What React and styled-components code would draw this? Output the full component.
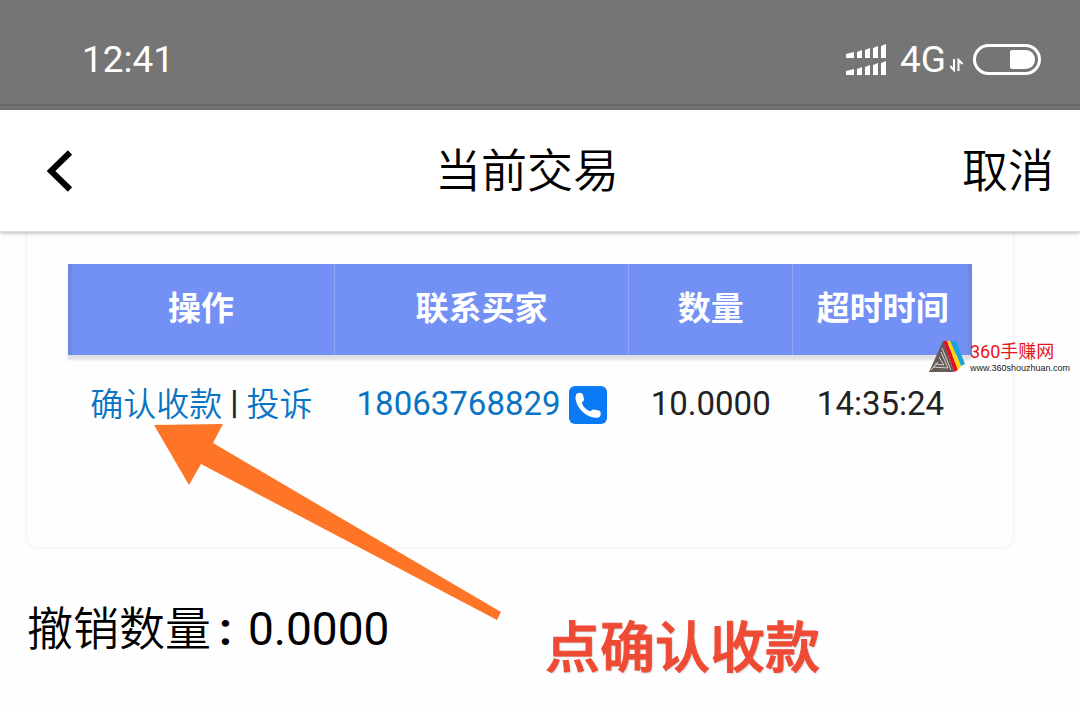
import React from 'react';
import styled, { createGlobalStyle } from 'styled-components';

const GlobalStyle = createGlobalStyle`
  * {
    box-sizing: border-box;
  }
  body {
    margin: 0;
    background: #fefefe;
    color: #000;
    font-family: Roboto, 'Noto Sans CJK SC', sans-serif;
    font-weight: 350;
  }
`;

const Page = styled.div`
  position: relative;
  overflow-x: hidden;
`;

const FlexItem = styled.div`
  display: flex;
  align-items: center;
`;

const StatusBar = styled(FlexItem)`
  justify-content: space-between;
  height: 110px;
  padding: 9px 39px 0 82px;
  background: linear-gradient(#757575 104px, #696969 104px, #696969 106px, #757575 106px);
  color: #fff;
  font-size: 37px;
  font-weight: 400;
`;

const StatusIcons = styled(FlexItem)`
  > .network {
    margin: 0 4px 0 13px;
  }
  > .battery {
    margin-left: 10px;
  }
`;

const NavBar = styled.header`
  position: relative;
  display: grid;
  grid-template-columns: 1fr auto 1fr;
  align-items: center;
  height: 122px;
  padding: 0 26px 8px 0;
  background: #fff;
  border-bottom: 1px solid #ddd;
  box-shadow: 0 1px 4px rgba(0, 0, 0, 0.3);
  z-index: 1;
`;

const NavTitle = styled.h1`
  margin: 0;
  font-size: 46px;
  font-weight: 350;
`;

const NavButton = styled.button`
  justify-self: ${(props) => (props.$end ? 'end' : 'start')};
  display: flex;
  padding: 0;
  border: 0;
  background: none;
  color: #000;
  font: inherit;
  font-size: 46px;
`;

const BackButton = styled(NavButton)`
  padding: 8px 20px 0 46px;
`;

const Card = styled.section`
  position: relative;
  margin: 0 66px 0 26px;
  padding: 32px 41px 94px;
  border: 1px solid #f4f4f4;
  border-top: 0;
  border-radius: 0 0 12px 12px;
  box-shadow: 0 1px 3px rgba(0, 0, 0, 0.04);
`;

const Table = styled.table`
  width: 100%;
  border-collapse: collapse;
  table-layout: fixed;
  color: #222;
  font-size: 33px;
  > thead {
    background: #7391f5;
    box-shadow: inset 4px 0 #6d8ae0, inset -4px 0 #6d8ae0, 0 5px 2px #dfe0e3;
  }
`;

const HeadCell = styled.th`
  width: ${(props) => props.$width};
  height: 91px;
  padding: 0 0 8px;
  color: #fff;
  font-weight: 700;
  & + & {
    border-left: 1px solid #8ea6f6;
  }
`;

const Cell = styled.td`
  height: 98px;
  padding: 0 0 2px;
  text-align: center;
  white-space: nowrap;
  font-weight: ${(props) => (props.$numeric ? 400 : 350)};
  &:last-child {
    padding-right: 4px;
  }
`;

const CellContent = styled(FlexItem)`
  justify-content: center;
  gap: 8px;
  padding-bottom: 2px;
  > span {
    font-weight: 500;
  }
`;

const Link = styled.a`
  color: #0a74c4;
  text-decoration: none;
`;

const PhoneLink = styled(Link)`
  display: flex;
  align-items: center;
  justify-content: center;
  gap: 8px;
  > svg {
    margin-top: 4px;
  }
`;

const Summary = styled(FlexItem)`
  padding: 47px 28px 49px 27px;
  font-size: 46px;
  line-height: 69px;
  > .colon {
    margin: 0 16px 0 8px;
    font-weight: 700;
  }
  > .value {
    font-weight: 400;
  }
`;

const ArrowOverlay = styled.svg`
  position: absolute;
  left: 127px;
  top: 191px;
  pointer-events: none;
`;

const Note = styled.strong`
  position: absolute;
  left: 545px;
  top: 608px;
  color: #ef4a34;
  font-size: 55px;
  font-weight: 500;
  line-height: 80px;
  -webkit-text-stroke: 1px #ef4a34;
  text-shadow: 1px 1px 2px rgba(0, 0, 0, 0.25);
`;

const Watermark = styled(FlexItem)`
  position: absolute;
  top: 340px;
  right: 6px;
  gap: 4px;
  z-index: 2;
`;

const WatermarkText = styled.div`
  color: #e8131b;
  font-size: 18px;
  font-weight: 400;
  line-height: 22px;
  white-space: nowrap;
  > small {
    display: block;
    width: 104px;
    color: #222;
    font-family: 'Liberation Sans', sans-serif;
    font-size: 9px;
    line-height: 10px;
  }
`;

const SIGNAL_BARS = [
  '0,10 8,8 8,14 0,14',
  '11,8 16,6 16,14 11,14',
  '19,6 24,4 24,14 19,14',
  '27,4 32,2 32,14 27,14',
  '35,2 40,0 40,14 35,14',
];

function SignalIcon() {
  return (
    <svg width="41" height="32" fill="#fff">
      {[0, 17].map((y) => (
        <g key={y} transform={`translate(0 ${y})`}>
          {SIGNAL_BARS.map((points) => (
            <polygon key={points} points={points} />
          ))}
        </g>
      ))}
    </svg>
  );
}

function DataIcon() {
  return (
    <svg width="13" height="26" fill="none" stroke="#fff" strokeWidth="2">
      <path d="M4 12V23L0 19M8.500 24V13L12.500 17" />
    </svg>
  );
}

function BatteryIcon() {
  return (
    <svg className="battery" width="68" height="31">
      <rect x="1.500" y="1.500" width="65" height="28" rx="14" fill="none" stroke="#fff" strokeWidth="3" />
      <path d="M39 6H53A9 9.500 0 0 1 53 25H39Q37 25 37 23V8Q37 6 39 6Z" fill="#fff" />
    </svg>
  );
}

function BackIcon() {
  return (
    <svg width="28" height="42" fill="none" stroke="#000" strokeWidth="6">
      <path d="M24 2.500L5 21L24 39.500" />
    </svg>
  );
}

function PhoneIcon() {
  return (
    <svg width="38" height="38">
      <rect width="38" height="38" rx="6" fill="#0a7af5" />
      <path
        d="M7 9C8 6 13 6 14 9L15 13C15.500 15 12.500 16 13 17.500C14.500 21 17 23.500 20.500 25C22 25.500 23 23 25 23.500L29.500 24.500C32.500 25 32 29 31 30.500C28 33.500 20 31 15 27C9 22 5 14 7 9Z"
        fill="#fff"
      />
    </svg>
  );
}

function WatermarkLogo() {
  return (
    <svg width="37" height="34">
      <path d="M14 1L0 32H25Z" fill="#655a55" />
      <path d="M12 12L19 28L4 27M10 17L15 25L6 24M13 8L22 30M9 22L2 30" stroke="#d8d4d2" fill="none" />
      <path d="M14 1H18L29 30L25 32Z" fill="#e0102a" />
      <path d="M18 1H21L32 26L29 30Z" fill="#ffd800" />
      <path d="M22 1H27L36 24L32 26Z" fill="#18a5dc" />
    </svg>
  );
}

function OrdersTable({ orders }) {
  return (
    <Table>
      <thead>
        <tr>
          <HeadCell $width="29.500%">操作</HeadCell>
          <HeadCell $width="32.500%">联系买家</HeadCell>
          <HeadCell $width="18.200%">数量</HeadCell>
          <HeadCell $width="19.800%">超时时间</HeadCell>
        </tr>
      </thead>
      <tbody>
        {orders.map((order) => (
          <tr key={order.phone}>
            <Cell>
              <CellContent>
                <Link href="#confirm">确认收款</Link>
                <span>|</span>
                <Link href="#complain">投诉</Link>
              </CellContent>
            </Cell>
            <Cell $numeric>
              <PhoneLink href={`tel:${order.phone}`}>
                {order.phone}
                <PhoneIcon />
              </PhoneLink>
            </Cell>
            <Cell $numeric>{order.amount}</Cell>
            <Cell $numeric>{order.timeLeft}</Cell>
          </tr>
        ))}
      </tbody>
    </Table>
  );
}

const orders = [{ phone: '18063768829', amount: '10.0000', timeLeft: '14:35:24' }];

export default function App() {
  return (
    <Page>
      <GlobalStyle />
      <StatusBar>
        <span>12:41</span>
        <StatusIcons>
          <SignalIcon />
          <span className="network">4G</span>
          <DataIcon />
          <BatteryIcon />
        </StatusIcons>
      </StatusBar>
      <NavBar>
        <BackButton aria-label="返回">
          <BackIcon />
        </BackButton>
        <NavTitle>当前交易</NavTitle>
        <NavButton $end>取消</NavButton>
      </NavBar>
      <Card>
        <OrdersTable orders={orders} />
        <ArrowOverlay width="348" height="198">
          <polygon points="0,2 69,1 59,20 347,189 343,197 47,41 35,62" fill="#ff7527" />
        </ArrowOverlay>
      </Card>
      <Summary>
        <span>撤销数量</span>
        <span className="colon">:</span>
        <span className="value">0.0000</span>
      </Summary>
      <Note>点确认收款</Note>
      <Watermark>
        <WatermarkLogo />
        <WatermarkText>
          360手赚网
          <small>www.360shouzhuan.com</small>
        </WatermarkText>
      </Watermark>
    </Page>
  );
}
